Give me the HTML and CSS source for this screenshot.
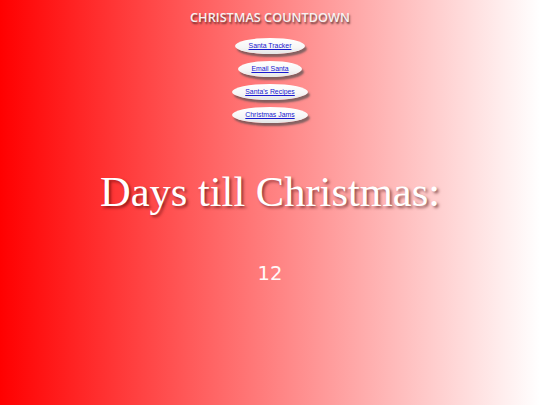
FILE: index.html
```html
<!DOCTYPE html>
<html lang="en">
<head>
<meta charset="utf-8">
<title>Christmas Countdown</title>
<link rel="stylesheet" href="styles.css">
</head>
<body>
<main class="page">
  <h1 class="title">CHRISTMAS COUNTDOWN</h1>
  <nav class="links">
    <a class="pill" href="#">Santa Tracker</a>
    <a class="pill" href="#">Email Santa</a>
    <a class="pill" href="#">Santa's Recipes</a>
    <a class="pill" href="#">Christmas Jams</a>
  </nav>
  <h2 class="headline">Days till Christmas:</h2>
  <p class="count">12</p>
</main>
</body>
</html>
```

FILE: styles.css
```css
html, body {
  margin: 0;
  height: 100%;
}

body {
  background: linear-gradient(to right, #ff0000 0%, #ffffff 100%);
}

.page {
  display: flex;
  flex-direction: column;
  align-items: center;
}

.title {
  margin: 9px 0 0;
  font-family: "Open Sans", "DejaVu Sans", sans-serif;
  font-size: 12.7px;
  font-weight: 600;
  line-height: 16px;
  color: #f6f2f2;
  text-shadow: 1px 2px 2px rgba(40, 20, 20, 0.7);
}

.links {
  display: flex;
  flex-direction: column;
  align-items: center;
  gap: 7px;
  margin-top: 13px;
}

.pill {
  display: block;
  padding: 4px 13.5px;
  border-radius: 50%;
  background: linear-gradient(to bottom, #ffffff 0%, #f6f6f6 60%, #e4e4e4 100%);
  box-shadow: 2px 3px 2px rgba(80, 80, 80, 0.7);
  font-family: "Liberation Sans", Arial, sans-serif;
  font-size: 6.9px;
  line-height: 8px;
  color: #1818d0;
  text-decoration: underline;
}

.headline {
  margin: 48px 0 0;
  font-family: "Liberation Serif", "Times New Roman", serif;
  font-size: 42.5px;
  font-weight: normal;
  line-height: 42px;
  color: #ffffff;
  text-shadow: 2px 2px 3px rgba(60, 0, 0, 0.55);
}

.count {
  margin: 51px 0 0;
  font-family: "DejaVu Sans", Verdana, sans-serif;
  font-size: 19.5px;
  line-height: 19.5px;
  color: #fff8f8;
}
```
